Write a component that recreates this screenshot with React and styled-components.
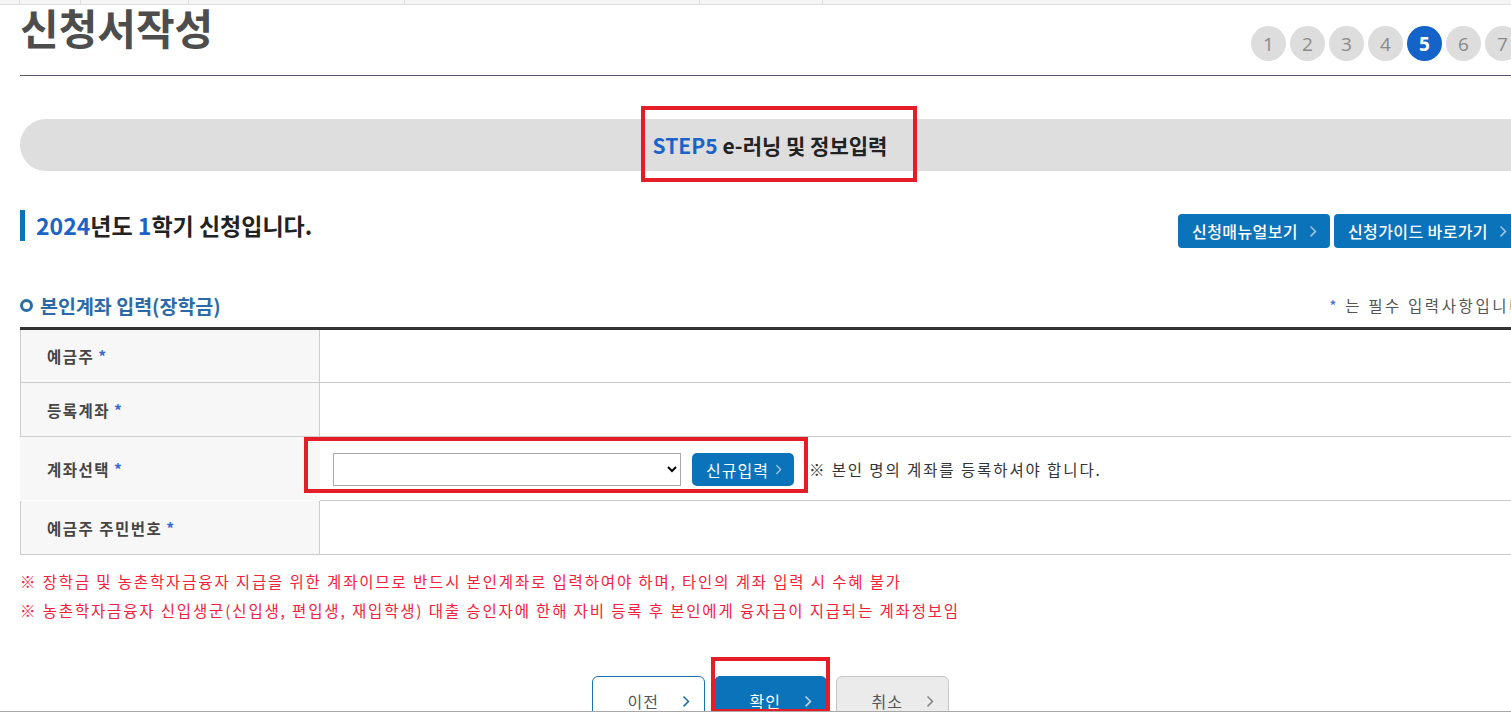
import styled, { createGlobalStyle } from "styled-components";

const GlobalStyle = createGlobalStyle`
  html, body {
    margin: 0;
    padding: 0;
    background: #ffffff;
    overflow: hidden;
  }
  body {
    font-family: "Noto Sans CJK KR", "Noto Sans", sans-serif;
    color: #333;
  }
  * {
    box-sizing: border-box;
  }
`;

const steps = [1, 2, 3, 4, 5, 6, 7];
const tabDividers = [20, 61, 108, 216, 295, 123, 465];

const rows = [
  { label: "예금주", height: 53 },
  { label: "등록계좌", height: 54 },
  { label: "계좌선택", height: 64, plain: true, select: true },
  { label: "예금주 주민번호", height: 54 },
];

function Chevron({ color = "#fff", size = 8 }) {
  return (
    <svg width={size} height={size * 1.6} viewBox="0 0 8 13" fill="none">
      <path d="M1.5 1.5 L6.5 6.5 L1.5 11.5" stroke={color} strokeWidth="1.6" />
    </svg>
  );
}

function App() {
  return (
    <>
      <GlobalStyle />
      <TopStrip>
        {tabDividers.map((w, i) => (
          <TabCell key={i} $width={w} />
        ))}
      </TopStrip>
      <Page>
        <HeaderRow>
          <Title>신청서작성</Title>
          <Steps>
            {steps.map((n) => (
              <Step key={n} $active={n === 5}>
                {n}
              </Step>
            ))}
          </Steps>
        </HeaderRow>

        <Banner>
          <BannerText>
            <Blue>STEP5</Blue> e-러닝 및 정보입력
          </BannerText>
          <Highlight $top={-13} $left={621} $width={276} $height={76} />
        </Banner>

        <HeadingRow>
          <Heading>
            <Blue>2024</Blue>년도 <Blue>1</Blue>학기 신청입니다.
          </Heading>
          <LinkButtons>
            <LinkButton>
              신청매뉴얼보기 <Chevron color="#9cc4e4" />
            </LinkButton>
            <LinkButton>
              신청가이드 바로가기 <Chevron color="#9cc4e4" />
            </LinkButton>
          </LinkButtons>
        </HeadingRow>

        <SubHeadingRow>
          <SubHeading>
            <Ring />
            본인계좌 입력(장학금)
          </SubHeading>
          <Required>
            <Star>*</Star> 는 필수 입력사항입니다
          </Required>
        </SubHeadingRow>

        <Table>
          {rows.map((row) => (
            <Row key={row.label} $height={row.height} $plain={row.plain}>
              <LabelCell $plain={row.plain}>
                {row.label} <Star>*</Star>
              </LabelCell>
              <ValueCell $plain={row.plain}>
                {row.select && (
                  <>
                    <SelectWrap>
                      <Select>
                        <option></option>
                      </Select>
                      <NewButton>
                        신규입력 <Chevron color="#9cc4e4" size={7} />
                      </NewButton>
                      <Highlight $top={-16} $left={-29} $width={504} $height={56} />
                    </SelectWrap>
                    <Hint>※ 본인 명의 계좌를 등록하셔야 합니다.</Hint>
                  </>
                )}
              </ValueCell>
            </Row>
          ))}
        </Table>

        <Notes>
          <Note>
            ※ 장학금 및 농촌학자금융자 지급을 위한 계좌이므로 반드시 본인계좌로
            입력하여야 하며, 타인의 계좌 입력 시 수혜 불가
          </Note>
          <Note>
            ※ 농촌학자금융자 신입생군(신입생, 편입생, 재입학생) 대출 승인자에 한해
            자비 등록 후 본인에게 융자금이 지급되는 계좌정보임
          </Note>
        </Notes>

        <Actions>
          <ActionButton $variant="outline">
            이전 <Chevron color="#1b72b8" />
          </ActionButton>
          <ActionButton $variant="primary">
            확인 <Chevron color="#b9d6ee" />
            <Highlight $top={-20} $left={-4} $width={119} $height={56} />
          </ActionButton>
          <ActionButton $variant="gray">
            취소 <Chevron color="#888" />
          </ActionButton>
        </Actions>
      </Page>
      <BottomLine />
    </>
  );
}

export default App;

const TopStrip = styled.div`
  display: flex;
  height: 5px;
  background: #f4f4f4;
  border-bottom: 1px solid #dedede;
`;

const TabCell = styled.div`
  width: ${(p) => p.$width}px;
  border-right: 1px solid #dcdcdc;
  &:last-child {
    flex: 1;
    border-right: none;
  }
`;

const Page = styled.div`
  width: 1500px;
  margin-left: 20px;
  height: 706px;
  overflow: hidden;
  position: relative;
`;

const HeaderRow = styled.div`
  display: flex;
  justify-content: space-between;
  height: 71px;
  border-bottom: 1px solid #5a5470;
`;

const Title = styled.h1`
  margin: 0;
  font-size: 42px;
  line-height: 44px;
  font-weight: 700;
  color: #4d4d4d;
`;

const Steps = styled.div`
  display: flex;
  gap: 4px;
  margin-top: 21px;
`;

const Step = styled.span`
  width: 35px;
  height: 35px;
  border-radius: 50%;
  display: flex;
  align-items: center;
  justify-content: center;
  font-family: "Open Sans", "Noto Sans", sans-serif;
  font-size: 19px;
  font-weight: ${(p) => (p.$active ? 700 : 400)};
  color: ${(p) => (p.$active ? "#ffffff" : "#8a8a8a")};
  background: ${(p) => (p.$active ? "#1363c9" : "#dddddd")};
`;

const Banner = styled.div`
  position: relative;
  margin-top: 43px;
  height: 52px;
  border-radius: 26px 0 0 26px;
  background: #dedede;
  display: flex;
  align-items: center;
  justify-content: center;
`;

const BannerText = styled.div`
  font-size: 21px;
  font-weight: 700;
  color: #222;
`;

const Blue = styled.span`
  color: #1b63c9;
`;

const Highlight = styled.span`
  position: absolute;
  top: ${(p) => p.$top}px;
  left: ${(p) => p.$left}px;
  width: ${(p) => p.$width}px;
  height: ${(p) => p.$height}px;
  border: 4px solid #e51d27;
  pointer-events: none;
`;

const HeadingRow = styled.div`
  display: flex;
  justify-content: space-between;
  align-items: flex-start;
  margin-top: 39px;
`;

const Heading = styled.h2`
  margin: 0;
  height: 31px;
  border-left: 5px solid #0a73b9;
  padding-left: 11px;
  font-size: 23px;
  line-height: 31px;
  font-weight: 700;
  color: #222;
`;

const LinkButtons = styled.div`
  display: flex;
  gap: 4px;
  margin-top: 4px;
`;

const LinkButton = styled.button`
  display: flex;
  align-items: center;
  gap: 11px;
  height: 34px;
  padding: 0 13px 0 14px;
  border: none;
  border-radius: 4px;
  background: #0a73b9;
  color: #fff;
  font-family: inherit;
  font-size: 16px;
  font-weight: 500;
  letter-spacing: 0.4px;
`;

const SubHeadingRow = styled.div`
  display: flex;
  justify-content: space-between;
  align-items: center;
  margin-top: 42px;
  height: 30px;
`;

const SubHeading = styled.h3`
  margin: 0;
  display: flex;
  align-items: center;
  gap: 7px;
  font-size: 19.5px;
  font-weight: 700;
  color: #2b6aa6;
`;

const Ring = styled.span`
  width: 13px;
  height: 13px;
  border-radius: 50%;
  border: 3px solid #2a6ea8;
`;

const Required = styled.span`
  font-size: 15.5px;
  color: #555;
  letter-spacing: 2.6px;
  margin-right: -6px;
`;

const Star = styled.span`
  color: #3a68d8;
`;

const Table = styled.div`
  margin-top: 7px;
  border-top: 3px solid #333;
`;

const Row = styled.div`
  display: flex;
  height: ${(p) => p.$height}px;
  border-bottom: 1px solid ${(p) => (p.$plain ? "transparent" : "#cccccc")};
`;

const LabelCell = styled.div`
  width: 300px;
  flex: none;
  display: flex;
  align-items: center;
  gap: 4px;
  padding-left: 26px;
  background: #f7f7f7;
  border-left: 1px solid ${(p) => (p.$plain ? "transparent" : "#cccccc")};
  border-right: 1px solid ${(p) => (p.$plain ? "transparent" : "#cccccc")};
  font-size: 15.5px;
  font-weight: 700;
  color: #454545;
  letter-spacing: 1.5px;
`;

const ValueCell = styled.div`
  flex: 1;
  display: flex;
  align-items: center;
  padding-left: 13px;
  border-bottom: ${(p) => (p.$plain ? "1px solid #cccccc" : "none")};
  margin-bottom: ${(p) => (p.$plain ? "-1px" : "0")};
`;

const SelectWrap = styled.div`
  position: relative;
  display: flex;
  align-items: center;
  gap: 11px;
  margin-top: 2px;
`;

const Select = styled.select`
  width: 348px;
  height: 33px;
  border: 1px solid #aaaaaa;
  border-radius: 0;
  background: #fff;
  font-family: inherit;
  font-size: 15px;
`;

const NewButton = styled.button`
  display: flex;
  align-items: center;
  gap: 6px;
  height: 33px;
  padding: 0 12px 0 14px;
  border: none;
  border-radius: 5px;
  background: #0a73b9;
  color: #fff;
  font-family: inherit;
  font-size: 16px;
  letter-spacing: 1px;
`;

const Hint = styled.span`
  margin-left: 15px;
  font-size: 15.5px;
  color: #333;
  letter-spacing: 1.9px;
`;

const Notes = styled.div`
  margin-top: 12px;
`;

const Note = styled.p`
  margin: 0;
  line-height: 29px;
  font-size: 15.5px;
  color: #f5213a;
  letter-spacing: 1.85px;
`;

const Actions = styled.div`
  display: flex;
  justify-content: center;
  gap: 9px;
  margin-top: 51px;
`;

const ActionButton = styled.button`
  position: relative;
  width: 113px;
  height: 50px;
  display: flex;
  align-items: center;
  justify-content: space-between;
  padding: 0 14px 0 35px;
  border-radius: 6px;
  font-family: inherit;
  font-size: 16px;
  letter-spacing: 1px;
  border: 1px solid
    ${(p) =>
      p.$variant === "outline"
        ? "#1b72b8"
        : p.$variant === "primary"
          ? "#0a73b9"
          : "#c6c6c6"};
  background: ${(p) =>
    p.$variant === "primary"
      ? "#0a73b9"
      : p.$variant === "gray"
        ? "#ebebeb"
        : "#ffffff"};
  color: ${(p) => (p.$variant === "primary" ? "#fff" : "#555")};
`;

const BottomLine = styled.div`
  position: fixed;
  left: 0;
  right: 0;
  bottom: 0;
  height: 1px;
  background: #a8a8a8;
`;
